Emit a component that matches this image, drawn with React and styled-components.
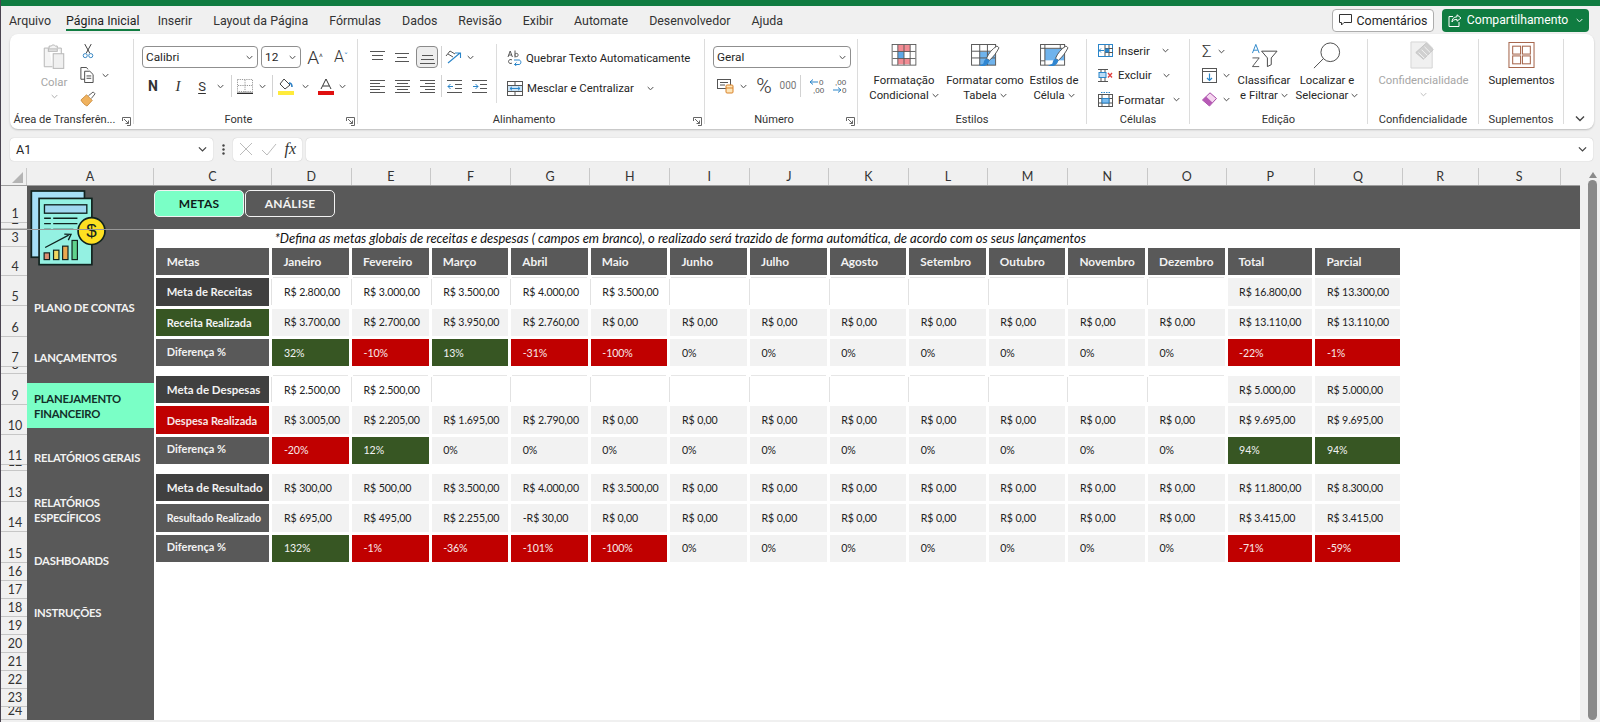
import React from "react";
import styled, { createGlobalStyle } from "styled-components";

const Global = createGlobalStyle`
  html, body { margin: 0; padding: 0; width: 1600px; height: 722px; overflow: hidden; background: #f0f0f0; }
  #root { width: 1600px; height: 722px; }
  * { box-sizing: border-box; }
  svg { flex: none; display: block; }
`;
const UI = `Roboto, "Noto Sans", sans-serif`;
const CAL = `Lato, "Liberation Sans", sans-serif`;

const Page = styled.div`
  width: 1600px; height: 722px; display: flex; flex-direction: column; overflow: hidden;
  background: #f0f0f0; border-left: 1px solid #4a4450; font-family: ${UI}; color: #262626; position: relative;
`;
const TopStrip = styled.div`height: 6px; background: #107c41; margin-left: -1px; flex: none;`;
const MenuBar = styled.div`height: 28px; flex: none; display: flex; align-items: center; padding: 0 11px 0 8px; font-size: 12.4px;`;
const Tabs = styled.nav`display: flex; gap: 21px; flex: 1; height: 100%;`;
const Tab = styled.div`
  display: flex; align-items: center; height: 100%; position: relative; color: #333; margin-right: ${p => p.$mr ?? 0}px;
  ${p => p.$on && `color: #1f1f1f; &::after { content: ""; position: absolute; left: 0; right: 0; bottom: 3px; height: 2px; background: #107c41; }`}
`;
const Comments = styled.button`
  width: 102px; height: 23px; margin-right: 8px; display: flex; align-items: center; justify-content: center; gap: 5px;
  background: #fff; border: 1px solid #adadad; border-radius: 4px; font: 12.4px ${UI}; color: #262626; padding: 0;
`;
const Share = styled.button`
  width: 147px; height: 23px; display: flex; align-items: center; justify-content: center; gap: 5px;
  background: #107c41; border: 0; border-radius: 4px; font: 12.2px ${UI}; color: #fff; padding: 0;
`;
const Ribbon = styled.section`
  height: 95px; flex: none; margin: 0 6px 0 9px; padding: 5px 0 5px; display: flex; background: #fff; border-radius: 8px;
  box-shadow: 0 1px 2px rgba(0,0,0,.22); position: relative;
`;
const Group = styled.div`
  width: ${p => p.$w}px; height: 85px; display: flex; flex-direction: column; flex: none; position: relative;
  border-right: 1px solid #dcdcdc;
`;
const GroupBody = styled.div`
  flex: 1; display: flex; padding: 7px 0 0 ${p => p.$pl ?? 8}px; min-height: 0;
`;
const GroupLabel = styled.div`
  height: 14px; margin-bottom: -3px; line-height: 14px; font-size: 11.1px; text-align: center; color: #333; white-space: nowrap;
  padding-right: ${p => p.$launcher ? 14 : 0}px;
`;
const LauncherBox = styled.span`position: absolute; right: 2px; bottom: -2px; width: 9px; height: 9px; display: flex;`;
const Column = styled.div`display: flex; flex-direction: column; gap: 7px;`;
const Row = styled.div`display: flex; height: 22px; align-items: center; flex: none;`;
const Slot = styled.span`
  width: ${p => p.$w}px; height: 22px; flex: none; display: flex; align-items: center; justify-content: center;
  ${p => p.$pressed && `background: #ededed; border: 1px solid #8a8a8a; border-radius: 4px;`}
`;
const Divider = styled.span`width: 6px; height: 22px; flex: none; display: flex; justify-content: center; &::before { content: ""; width: 1px; background: #d2d2d2; }`;
const SelectBox = styled.div`
  width: ${p => p.$w}px; height: 22px; flex: none; display: flex; align-items: center; justify-content: space-between;
  border: 1px solid #8f8f8f; border-radius: 4px; padding: 0 4px 0 3px; font: 11.8px ${UI}; color: #262626; background: #fff;
`;
const ClipPaste = styled.div`
  width: 40px; margin: -2px 6px 0 24px; display: flex; flex-direction: column; align-items: center; color: #a6a6a6; font-size: 11.4px;
`;
const ClipLabel = styled.span`margin: 5px 0 4px; line-height: 15px;`;
const ClipTools = styled.div`display: flex; flex-direction: column; gap: 8px; margin-top: -3px;`;
const ClipTool = styled.div`display: flex; align-items: center; gap: 8px; height: 16px; padding-left: ${p => p.$pl ?? 0}px;`;
const Glyph = styled.span`
  font: ${p => p.$italic ? "italic" : "normal"} ${p => p.$weight ?? 400} ${p => p.$size ?? 14}px ${p => p.$serif ? `"Liberation Serif", serif` : UI};
  color: ${p => p.$color ?? "#333"}; line-height: 1; ${p => p.$under ? "text-decoration: underline; text-underline-offset: 2px;" : ""}
`;
const WrapSection = styled.div`
  width: 200px; height: 59px; padding: 3px 0 0 10px; margin-top: -2px; border-left: 1px solid #dcdcdc;
  display: flex; flex-direction: column; gap: 8px; white-space: nowrap;
`;
const WrapRow = styled.div`display: flex; align-items: center; height: 22px; gap: 4px; font-size: 11.4px; color: #262626;`;
const BigBtn = styled.div`
  width: ${p => p.$w}px; flex: none; display: flex; flex-direction: column; align-items: center; font-size: 11.3px; line-height: 15px;
  color: ${p => p.$off ? "#a6a6a6" : "#262626"}; white-space: nowrap; margin-top: -5px;
`;
const BigIcon = styled.div`height: 32px; flex: none; padding-top: ${p => p.$pt ?? 0}px; display: flex; align-items: flex-start; justify-content: center;`;
const Caret = styled.span`display: inline-flex; vertical-align: 1px; margin-left: 3px;`;
const OffCaret = styled.span`margin-top: 4px; display: flex;`;
const CellsCol = styled.div`display: flex; flex-direction: column; gap: 3px; margin-top: -6px;`;
const CellBtn = styled.div`display: flex; align-items: center; height: 21.5px; font-size: 11.4px; gap: 5px; white-space: nowrap;`;
const EditCol = styled.div`display: flex; flex-direction: column; gap: 7px; width: 30px; margin-right: 2px; margin-top: -3px;`;
const EditBtn = styled.div`display: flex; align-items: center; gap: 6px; height: 17px;`;
const CollapseBox = styled.div`position: absolute; right: 9px; bottom: 7px; display: flex;`;

const FormulaBar = styled.div`height: 23px; flex: none; margin: 8.5px 7px 0 9px; display: flex; align-items: stretch;`;
const Field = styled.div`
  background: #fff; border-radius: 4px; box-shadow: 0 0 1px rgba(0,0,0,.3); display: flex; align-items: center;
  width: ${p => p.$w ? p.$w + "px" : "auto"}; flex: ${p => p.$w ? "none" : 1}; padding: 0 6px; justify-content: space-between; font-size: 12.6px;
`;
const Dots = styled.div`width: 20px; display: flex; align-items: center; justify-content: center; flex: none;`;
const FxGap = styled.div`width: 4px; flex: none;`;
const FxText = styled.span`font: italic 16px "Liberation Serif", serif; color: #333;`;

const Workbook = styled.div`flex: 1; margin-top: 7.5px; display: flex; min-height: 0; position: relative;`;
const SheetWrap = styled.div`width: 1579px; flex: none; display: flex; flex-direction: column; height: 552px;`;
const ColHeaders = styled.div`height: 18px; display: flex; flex: none; background: #f0f0f0; border-bottom: 1px solid #9e9e9e; font: 12.5px ${CAL}; color: #333;`;
const Corner = styled.div`width: 26px; flex: none; display: flex; align-items: flex-end; justify-content: flex-end; padding: 0 3px 2px 0; border-right: 1px solid #c8c8c8;`;
const ColLetter = styled.div`
  width: ${p => p.$w}px; flex: none; text-align: center; line-height: 17px; border-right: 1px solid #c8c8c8;
`;
const SheetArea = styled.div`flex: 1; display: flex; min-height: 0; position: relative;`;
const RowHeaders = styled.div`width: 26px; flex: none; display: flex; flex-direction: column; font: 12.5px ${CAL}; color: #333; overflow: hidden;`;
const RowNum = styled.div`
  height: ${p => p.$h}px; flex: none; display: flex; align-items: flex-end; justify-content: center; border-bottom: 1px solid #c6c6c6;
  line-height: 16px; overflow: hidden; padding-left: 2px;
`;
const Canvas = styled.div`flex: 1; display: flex; flex-direction: column; min-width: 0; background: #fff;`;
const Band = styled.div`height: 43px; flex: none; background: #595959; display: flex; gap: 1px; padding: 4px 0 0 127px;`;
const SheetTab = styled.div`
  width: ${p => p.$w}px; height: 27px; border: 1px solid #f2f2f2; border-radius: 5px; display: flex; align-items: center; justify-content: center;
  font: 700 12px ${CAL}; letter-spacing: .2px; background: ${p => p.$on ? "#7affc6" : "#595959"}; color: ${p => p.$on ? "#10201a" : "#f2f2f2"};
`;
const Lower = styled.div`flex: 1; display: flex; min-height: 0;`;
const Sidebar = styled.aside`width: 127px; flex: none; background: #595959; display: flex; flex-direction: column; padding-top: 62px;`;
const SideItem = styled.div`
  height: ${p => p.$h ?? 32}px; margin-top: ${p => p.$mt ?? 0}px; flex: none; display: flex; align-items: center; padding-left: 7px; white-space: nowrap;
  font: 700 11.3px/15px ${CAL}; letter-spacing: -.25px; color: ${p => p.$on ? "#12302a" : "#f2f2f2"}; background: ${p => p.$on ? "#7affc6" : "transparent"};
`;
const Main = styled.main`flex: 1; min-width: 0; padding-left: 1.7px; background: #fff;`;
const Note = styled.div`height: 19px; padding-left: 119px; font: italic 13px/18px ${CAL}; color: #111; white-space: nowrap;`;
const Groups = styled.div`display: flex; flex-direction: column; gap: 10px;`;
const Block = styled.div`display: flex; flex-direction: column; gap: 3px;`;
const TableRow = styled.div`
  display: grid; height: 27.3px; gap: 3px; grid-template-columns: 113.8px repeat(12, 76.6px) 84.8px 85px;
`;
const tones = {
  white: ["#fff", "#222"], light: ["#f2f2f2", "#222"], green: ["#375623", "#f2f2f2"], red: ["#c00000", "#f8e8e8"],
  head: ["#595959", "#f2f2f2"], dark: ["#404040", "#f2f2f2"], grey: ["#595959", "#f2f2f2"],
};
const Cell = styled.div`
  display: flex; align-items: center; padding-left: ${p => p.$label ? 11 : 11.5}px; white-space: nowrap;
  background: ${p => tones[p.$tone][0]}; color: ${p => tones[p.$tone][1]};
  font: ${p => p.$label ? 700 : 400} ${p => p.$size ?? 10.6}px ${CAL};
  ${p => !p.$label && "letter-spacing: -.1px;"}
  ${p => p.$line && "box-shadow: -2px 0 0 -1px #e2e2e2, 0 -2px 0 -1px #e6e6e6;"}
  ${p => p.$up && "padding-bottom: 3px;"}
`;
const Scrollbar = styled.div`width: 20px; flex: none; height: 552px; display: flex; flex-direction: column; align-items: center; padding-top: 4px; gap: 2px;`;
const Thumb = styled.div`width: 9px; flex: 1; background: #8a8a8a; border-radius: 5px; margin-left: 5px;`;
const ArrowUp = styled.div`width: 0; height: 0; margin-left: 5px; border: 4px solid transparent; border-top: 0; border-bottom: 6px solid #8a8a8a;`;
const LogoBox = styled.div`position: absolute; left: 27.5px; top: 2.5px; width: 79px; height: 79px; display: flex;`;
const FreezeLine = styled.div`position: absolute; left: 0; top: 43px; width: 153px; height: 1px; background: #989898;`;

const Chev = ({ c = "#444", s = 7 }) => (
  <svg width={s} height={s * .7} viewBox="0 0 10 7" fill="none"><path d="M1 1.5l4 4 4-4" stroke={c} strokeWidth="1.4" /></svg>
);
const Launcher = () => (
  <LauncherBox><svg width="9" height="9" viewBox="0 0 9 9" fill="none" stroke="#666"><path d="M.5 4V.5H8.5V8.5H5" /><path d="M2 2l4.5 4.5M6.5 3.5v3h-3" /></svg></LauncherBox>
);
const Lines = ({ rows, c = "#555" }) => (
  <svg width="15" height="14" viewBox="0 0 15 14" stroke={c} strokeWidth="1" fill="none">
    {rows.map(([x1, x2, y], i) => <path key={i} d={`M${x1} ${y}.5H${x2}`} />)}
  </svg>
);
const Paste = () => (
  <svg width="26" height="26" viewBox="0 0 28 32" fill="none" stroke="#b5b5b5" strokeWidth="1.2">
    <path d="M8 5H2v23h10" fill="#f4f4f4" /><path d="M8 5V2.5h2.5a3 3 0 0 1 5 0H18V5M18 5h5v7" fill="#f4f4f4" />
    <rect x="7" y="6" width="11" height="3" fill="#e6e6e6" /><rect x="13" y="12" width="13" height="18" fill="#f0f0f0" />
  </svg>
);
const Scissors = () => (
  <svg width="12" height="16" viewBox="0 0 13 17" fill="none" stroke="#333" strokeWidth="1"><path d="M3 1l5.5 10M10 1L4.5 11" /><circle cx="3.5" cy="13.5" r="2.2" stroke="#2a7fc0" /><circle cx="9.5" cy="13.5" r="2.2" stroke="#2a7fc0" /></svg>
);
const Copy = () => (
  <svg width="14" height="16" viewBox="0 0 14 17" fill="#fff" stroke="#444" strokeWidth="1"><path d="M5 13H.5V.5h6L8 2.5" /><path d="M4.5 4.5H10l3.5 3.5v8.5h-9z" /><path d="M6.5 9.5h5M6.5 12h5" /></svg>
);
const Brush = () => (
  <svg width="16" height="16" viewBox="0 0 17 17"><path d="M1 9.5L7 4l6 6-5.5 6C5 15 2 12 1 9.5z" fill="#f0b25e" stroke="#c07f2e" strokeWidth=".8" /><path d="M9 5l5-4 2 2-4 5" fill="#fff" stroke="#555" strokeWidth="1" /></svg>
);
const BorderIcon = () => (
  <svg width="16" height="15" viewBox="0 0 16 15" fill="none" stroke="#999" strokeDasharray="1.2 1"><rect x=".5" y=".5" width="15" height="12" /><path d="M8 1v12M1 6.5h14" /><path d="M0 14.3h16" stroke="#222" strokeDasharray="0" strokeWidth="1.3" /></svg>
);
const FillIcon = () => (
  <svg width="16" height="17" viewBox="0 0 16 17"><path d="M6 1l6 6-5 4-5-5z" fill="#fff" stroke="#444" /><path d="M11 5c2 0 3 2 3 4" stroke="#2c7fc4" strokeWidth="1.6" fill="none" /><rect y="13" width="16" height="4" fill="#ffeb3b" /></svg>
);
const FontColor = () => (
  <svg width="16" height="17" viewBox="0 0 16 17"><path d="M3 11L8 1l5 10M5 8h6" stroke="#333" fill="none" /><rect y="13" width="16" height="4" fill="#e01010" /></svg>
);
const Orient = () => (
  <svg width="18" height="16" viewBox="0 0 18 16" fill="none"><path d="M1 7l4-5 5 3M3 5l5 3" stroke="#555" /><path d="M3 14L15 4M10 4h5.5v5" stroke="#2a85c9" strokeWidth="1.1" /></svg>
);
const Indent = ({ flip }) => (
  <svg width="15" height="13" viewBox="0 0 15 13" fill="none" stroke="#555"><path d="M0 .5h15M0 12.5h15M8 4.5h7M8 8.5h7" />
    <path d={flip ? "M6 6.5H1M3.5 4L1 6.5 3.5 9" : "M1 6.5h5M3.5 4L6 6.5 3.5 9"} stroke="#2a85c9" /></svg>
);
const WrapIcon = () => (
  <svg width="15" height="16" viewBox="0 0 15 16" fill="none"><path d="M1 7l2.2-6L5.4 7M1.8 5h2.8M8 .5v7M8 4.5c0-1.5 3-1.5 3 0v1c0 1.5-3 1.5-3 0" stroke="#555" /><path d="M5 10c-1-1-3.5-.5-3.5 1.5S4 14 5 13" stroke="#555" /><path d="M7 10h5c2.5 0 2.5 4.5 0 4.5H7.5M9.5 12.5l-2 2 2 1.5" stroke="#2a85c9" /></svg>
);
const MergeIcon = () => (
  <svg width="16" height="15" viewBox="0 0 16 15" fill="#fff"><rect x=".5" y=".5" width="15" height="14" stroke="#555" /><rect x="1" y="5" width="14" height="5" fill="#cbe4f7" /><path d="M1 4.5h14M1 10.5h14M8 1v3M8 11v3" stroke="#555" /><path d="M3 7.5h10M5 5.8L3 7.5l2 1.7M11 5.8l2 1.7-2 1.7" stroke="#2a85c9" fill="none" /></svg>
);
const Accounting = () => (
  <svg width="17" height="15" viewBox="0 0 17 15" fill="none"><rect x=".5" y=".5" width="13" height="9" stroke="#555" /><path d="M3 3.5h8M3 6h5" stroke="#555" /><rect x="9" y="6" width="7" height="8" rx="1" fill="#fde5b8" stroke="#d9822b" /><path d="M9 9h7" stroke="#d9822b" /></svg>
);
const DecLeft = () => (
  <svg width="17" height="16" viewBox="0 0 17 16" fill="none"><path d="M1 4h8M4 1.5L1 4l3 2.5" stroke="#2a85c9" /><text x="10" y="7" fontSize="8" fill="#555" fontFamily="Liberation Sans">0</text><text x="4" y="15" fontSize="8" fill="#555" fontFamily="Liberation Sans">,00</text></svg>
);
const DecRight = () => (
  <svg width="17" height="16" viewBox="0 0 17 16" fill="none"><text x="3" y="7" fontSize="8" fill="#555" fontFamily="Liberation Sans">,00</text><path d="M1 12h8M6 9.5L9 12l-3 2.5" stroke="#2a85c9" /><text x="10" y="15" fontSize="8" fill="#555" fontFamily="Liberation Sans">0</text></svg>
);
const CondFormat = () => (
  <svg width="26" height="22" viewBox="0 0 28 25">
    <rect x="7" y="1" width="7" height="8" fill="#f28b93" /><rect x="7" y="9" width="7" height="7" fill="#5ea7e6" /><rect x="7" y="16" width="14" height="7" fill="#f28b93" /><rect x="14" y="1" width="7" height="8" fill="#f28b93" />
    <g stroke="#555" fill="none"><rect x=".5" y=".5" width="27" height="23.5" /><path d="M7 1v23M14 1v23M21 1v23M1 8.5h26M1 16.5h26" /></g>
  </svg>
);
const BrushOver = () => <g><path d="M27 2c-5 3-9 8-11 13l3 2c4-3 8-9 10-13z" fill="#fff" stroke="#555" /><path d="M16 15c-2 1-3 3-3 5-1 1-3 2-5 2 5 2 10 1 11-5z" fill="#2f86d1" /></g>;
const TableFmt = () => (
  <svg width="29" height="25" viewBox="0 0 30 26">
    <rect x="9" y="8" width="16" height="14" fill="#6fb3ec" />
    <g stroke="#555" fill="none"><rect x=".5" y=".5" width="25" height="21.5" /><path d="M9 1v21M17 1v21M1 7.5h24M1 14.5h24" /></g><BrushOver />
  </svg>
);
const CellStyle = () => (
  <svg width="29" height="25" viewBox="0 0 30 26">
    <rect x="5" y="5" width="20" height="12" fill="#6fb3ec" />
    <g stroke="#555" fill="none"><rect x=".5" y=".5" width="25" height="21.5" /><path d="M5 1v21M21 1v4M1 4.5h24M1 17.5h4" /></g><BrushOver />
  </svg>
);
const InsertCell = () => (
  <svg width="15" height="13" viewBox="0 0 15 13" fill="none"><rect x=".5" y=".5" width="14" height="12" stroke="#2a85c9" /><path d="M7 1v11M11 1v11M7 4.5h8M7 8.5h8" stroke="#555" /><rect x="7" y="4.5" width="4" height="4" fill="#2a85c9" /><path d="M6 6.5H1M3 4.5l-2 2 2 2" stroke="#2a85c9" /></svg>
);
const DeleteCell = () => (
  <svg width="15" height="13" viewBox="0 0 15 13" fill="none"><path d="M0 .5h10M0 12.5h10M3 .5v3M7 .5v3M3 9v3.5M7 9v3.5" stroke="#555" /><rect x="1" y="3.5" width="7" height="5" fill="#bcdcf5" stroke="#2a85c9" /><path d="M10 4l4 4.5M14 4l-4 4.5" stroke="#e04040" strokeWidth="1.3" /></svg>
);
const FormatCell = () => (
  <svg width="15" height="15" viewBox="0 0 15 15" fill="none" stroke="#555"><rect x=".5" y="2.5" width="14" height="12" /><path d="M4 3v11M11 3v11M1 6.5h13M1 11h13" /><rect x="4" y="6.5" width="7" height="4.5" fill="#7bbcf0" stroke="#2a85c9" /><path d="M3 .5h9" stroke="#2a85c9" strokeDasharray="1.5 1" /></svg>
);
const FillDown = () => (
  <svg width="15" height="15" viewBox="0 0 15 15" fill="none"><rect x=".5" y=".5" width="14" height="14" stroke="#555" /><path d="M1 3.5h13" stroke="#555" /><path d="M7.5 5.5v7M5 10l2.5 2.5L10 10" stroke="#2a85c9" strokeWidth="1.2" /></svg>
);
const Eraser = () => (
  <svg width="15" height="15" viewBox="0 0 15 15"><path d="M0.5 8L8 .8 14.5 6.5 7.5 14z" fill="#f5d6ef" stroke="#a347a3" /><path d="M.5 8l3.5-3.6 6.4 6L7.5 14z" fill="#b65ab5" /></svg>
);
const SortFilter = () => (
  <svg width="27" height="25" viewBox="0 0 28 25" fill="none"><path d="M1.5 10L5 1l3.5 9M3 7h4" stroke="#2a85c9" /><path d="M1.5 15h7L1.5 24h7" stroke="#555" /><path d="M11 8h16l-6 7v7l-4 2v-9z" stroke="#444" /></svg>
);
const Finder = () => (
  <svg width="28" height="28" viewBox="0 0 30 30" fill="none" stroke="#444" strokeWidth="1"><circle cx="18.5" cy="11" r="10" fill="#fff" /><path d="M11 18L1 28" /></svg>
);
const Sensitivity = () => (
  <svg width="27" height="28" viewBox="0 0 28 29"><path d="M1 1h16l6 6v21H1z" fill="#f0f0f0" stroke="#d4d4d4" /><path d="M6 12L17 2l7 7-10 10z" fill="#d0d0d0" stroke="#c4c4c4" /><path d="M9 12l6 6M12 9l6 6M15 6l6 6" stroke="#f4f4f4" /></svg>
);
const Addins = () => (
  <svg width="27" height="26" viewBox="0 0 28 28" fill="none" stroke="#a5644a" strokeWidth="1.1"><rect x=".5" y=".5" width="27" height="27" /><rect x="4.5" y="4.5" width="8.5" height="8.5" /><rect x="15" y="4.5" width="8.5" height="8.5" /><rect x="4.5" y="15" width="8.5" height="8.5" /><rect x="15" y="15" width="8.5" height="8.5" /></svg>
);
const Logo = () => (
  <svg width="79" height="79" viewBox="25 25 235 235">
    <rect x="32" y="31" width="158" height="197" fill="#a6e0f7" stroke="#10231f" strokeWidth="5" />
    <rect x="55" y="53" width="157" height="197" fill="#94f1e2" stroke="#10231f" strokeWidth="5" />
    <rect x="71" y="72" width="126" height="25" fill="#a0d8f0" stroke="#10231f" strokeWidth="4" />
    <g stroke="#10231f" strokeWidth="4"><path d="M70 112h20M97 112h72M70 128h20M97 128h72M70 145h20M97 145h60" /></g>
    <path d="M73 199l70-37M130 159l20 1-8 17" fill="none" stroke="#10231f" strokeWidth="4" />
    <g stroke="#10231f" strokeWidth="3.5"><rect x="70" y="215" width="16" height="20" fill="#db8f72" /><rect x="98" y="207" width="16" height="28" fill="#f2d760" /><rect x="125" y="195" width="16" height="40" fill="#eaa950" /><rect x="153" y="178" width="16" height="57" fill="#5ed28d" /></g>
    <circle cx="211" cy="150" r="40" fill="#fde021" stroke="#10231f" strokeWidth="5" />
    <text x="211" y="169" textAnchor="middle" fontSize="56" fontFamily="Liberation Sans" fill="#10231f">$</text>
  </svg>
);

const tabs = [["Arquivo", -6], ["Página Inicial", -3], ["Inserir"], ["Layout da Página"], ["Fórmulas"], ["Dados"], ["Revisão"], ["Exibir"], ["Automate"], ["Desenvolvedor"], ["Ajuda"]];
const months = ["Janeiro", "Fevereiro", "Março", "Abril", "Maio", "Junho", "Julho", "Agosto", "Setembro", "Outubro", "Novembro", "Dezembro"];
const colWidths = [["A", 127], ["C", 118], ["D", 79.6], ["E", 79.6], ["F", 79.6], ["G", 79.6], ["H", 79.6], ["I", 79.6], ["J", 79.6], ["K", 79.6], ["L", 79.6], ["M", 79.6], ["N", 79.6], ["O", 79.6], ["P", 87.5], ["Q", 88], ["R", 76], ["S", 82]];
const rowHeights = [["1", 37], ["2", 6], ["3", 18], ["4", 29], ["5", 30], ["6", 31], ["7", 30], ["8", 7], ["9", 31], ["10", 30], ["11", 30], ["12", 6], ["13", 31], ["14", 30], ["15", 31], ["16", 18], ["17", 18], ["18", 18], ["19", 18], ["20", 18], ["21", 18], ["22", 18], ["23", 18], ["24", 13]];
const zero = "R$ 0,00";
const m = v => `R$ ${v},00`;
const fill = (vals, v = zero) => [...vals, ...Array(12 - vals.length).fill(v)];
const pct = vals => fill(vals, "0%");
const toneOf = s => s.startsWith("-") ? "red" : s === "0%" ? "light" : "green";

const blocks = [
  [
    { label: "Meta de Receitas", tone: "dark", size: 11.2, base: "white", line: true, vals: fill(["2.800", "3.000", "3.500", "4.000", "3.500"].map(m), ""), tot: [m("16.800"), m("13.300")] },
    { label: "Receita Realizada", tone: "green", size: 11, base: "light", vals: fill(["3.700", "2.700", "3.950", "2.760"].map(m)), tot: [m("13.110"), m("13.110")] },
    { label: "Diferença %", tone: "grey", size: 11, diff: true, up: true, vals: pct(["32%", "-10%", "13%", "-31%", "-100%"]), tot: ["-22%", "-1%"] },
  ],
  [
    { label: "Meta de Despesas", tone: "dark", size: 11.5, base: "white", line: true, vals: fill([m("2.500"), m("2.500")], ""), tot: [m("5.000"), m("5.000")] },
    { label: "Despesa Realizada", tone: "red", size: 11, base: "light", vals: fill(["3.005", "2.205", "1.695", "2.790"].map(m)), tot: [m("9.695"), m("9.695")] },
    { label: "Diferença %", tone: "grey", size: 11, diff: true, up: true, vals: pct(["-20%", "12%"]), tot: ["94%", "94%"] },
  ],
  [
    { label: "Meta de Resultado", tone: "dark", size: 11.5, base: "light", vals: fill(["300", "500", "3.500", "4.000", "3.500"].map(m)), tot: [m("11.800"), m("8.300")] },
    { label: "Resultado Realizado", tone: "grey", size: 10.6, base: "light", vals: fill([m("695"), m("495"), m("2.255"), "-R$ 30,00"]), tot: [m("3.415"), m("3.415")] },
    { label: "Diferença %", tone: "grey", size: 11, diff: true, up: true, vals: pct(["132%", "-1%", "-36%", "-101%", "-100%"]), tot: ["-71%", "-59%"] },
  ],
];

const DataRow = ({ r }) => (
  <TableRow>
    <Cell $label $tone={r.tone} $size={r.size} $up={r.up}>{r.label}</Cell>
    {r.vals.map((v, i) => <Cell key={i} $tone={r.diff ? toneOf(v) : r.base} $line={r.line}>{v}</Cell>)}
    {r.tot.map((v, i) => <Cell key={"t" + i} $tone={r.diff ? toneOf(v) : "light"}>{v}</Cell>)}
  </TableRow>
);

export default function App() {
  return (
    <Page>
      <Global />
      <TopStrip />
      <MenuBar>
        <Tabs>
          {tabs.map(([t, mr]) => <Tab key={t} $mr={mr} $on={t === "Página Inicial"}>{t}</Tab>)}
        </Tabs>
        <Comments>
          <svg width="13" height="12" viewBox="0 0 13 12" fill="none" stroke="#333"><path d="M.5.5h12v8H5L2.5 11V8.5h-2z" /></svg>
          Comentários
        </Comments>
        <Share>
          <svg width="14" height="13" viewBox="0 0 14 13" fill="none" stroke="#fff"><path d="M9 .8L13 4 9 7.2V5.4C6 5.4 4.6 6.5 4 8c0-3 1.5-5 5-5.2zM5 2.5H1v10h10V8" /></svg>
          Compartilhamento
          <Caret><Chev c="#fff" /></Caret>
        </Share>
      </MenuBar>
      <Ribbon>
        <Group $w={124}>
          <GroupBody $pl={0}>
            <ClipPaste><Paste /><ClipLabel>Colar</ClipLabel><Chev c="#aaa" /></ClipPaste>
            <ClipTools>
              <ClipTool $pl={2}><Scissors /></ClipTool>
              <ClipTool><Copy /><Chev /></ClipTool>
              <ClipTool><Brush /></ClipTool>
            </ClipTools>
          </GroupBody>
          <GroupLabel $launcher>Área de Transferên...</GroupLabel>
          <Launcher />
        </Group>
        <Group $w={224}>
          <GroupBody>
            <Column>
              <Row>
                <SelectBox $w={116}>Calibri<Chev /></SelectBox>
                <Slot $w={3} />
                <SelectBox $w={40}>12<Chev /></SelectBox>
                <Slot $w={28}><Glyph $size={19} $weight={300}>A</Glyph><Glyph $size={9} $color="#555">^</Glyph></Slot>
                <Slot $w={24}><Glyph $size={16} $weight={300}>A</Glyph><Glyph $size={9} $color="#2a85c9">ˇ</Glyph></Slot>
              </Row>
              <Row>
                <Slot $w={22}><Glyph $weight={700} $size={14}>N</Glyph></Slot>
                <Slot $w={28}><Glyph $italic $serif $size={15}>I</Glyph></Slot>
                <Slot $w={20}><Glyph $under $size={13}>S</Glyph></Slot>
                <Slot $w={16}><Chev /></Slot>
                <Divider />
                <Slot $w={21}><BorderIcon /></Slot>
                <Slot $w={14}><Chev /></Slot>
                <Divider />
                <Slot $w={22}><FillIcon /></Slot>
                <Slot $w={16}><Chev /></Slot>
                <Slot $w={25}><FontColor /></Slot>
                <Slot $w={8}><Chev /></Slot>
              </Row>
            </Column>
          </GroupBody>
          <GroupLabel $launcher>Fonte</GroupLabel>
          <Launcher />
        </Group>
        <Group $w={347}>
          <GroupBody>
            <Column>
              <Row>
                <Slot $w={22}><Lines rows={[[0, 15, 1], [2, 13, 5], [2, 13, 9]]} /></Slot>
                <Slot $w={28}><Lines rows={[[0, 14, 3], [2, 12, 7], [0, 14, 11]]} /></Slot>
                <Slot $w={22} $pressed><Lines rows={[[2, 13, 5], [1, 14, 9], [0, 15, 13]]} /></Slot>
                <Divider />
                <Slot $w={20}><Orient /></Slot>
                <Slot $w={12}><Chev /></Slot>
                <Slot $w={20} />
              </Row>
              <Row>
                <Slot $w={22}><Lines rows={[[0, 15, 1], [0, 10, 4], [0, 15, 7], [0, 10, 10], [0, 15, 13]]} /></Slot>
                <Slot $w={28}><Lines rows={[[0, 15, 1], [2, 13, 4], [0, 15, 7], [2, 13, 10], [0, 15, 13]]} /></Slot>
                <Slot $w={22}><Lines rows={[[0, 15, 1], [5, 15, 4], [0, 15, 7], [5, 15, 10], [0, 15, 13]]} /></Slot>
                <Divider />
                <Slot $w={20}><Indent flip /></Slot>
                <Slot $w={30}><Indent /></Slot>
              </Row>
            </Column>
            <WrapSection>
              <WrapRow><WrapIcon />Quebrar Texto Automaticamente</WrapRow>
              <WrapRow><MergeIcon />Mesclar e Centralizar<Caret><Slot $w={20}><Chev /></Slot></Caret></WrapRow>
            </WrapSection>
          </GroupBody>
          <GroupLabel $launcher>Alinhamento</GroupLabel>
          <Launcher />
        </Group>
        <Group $w={153}>
          <GroupBody>
            <Column>
              <Row><SelectBox $w={138}>Geral<Chev /></SelectBox></Row>
              <Row>
                <Slot $w={24}><Accounting /></Slot>
                <Slot $w={12}><Chev /></Slot>
                <Slot $w={30}><Glyph $size={21} $weight={300}>%</Glyph></Slot>
                <Slot $w={18}><Glyph $size={10} $color="#777">000</Glyph></Slot>
                <Divider />
                <Slot $w={28}><DecLeft /></Slot>
                <Slot $w={18}><DecRight /></Slot>
              </Row>
            </Column>
          </GroupBody>
          <GroupLabel $launcher>Número</GroupLabel>
          <Launcher />
        </Group>
        <Group $w={229}>
          <GroupBody $pl={4}>
            <BigBtn $w={84}><BigIcon $pt={3}><CondFormat /></BigIcon>Formatação<span>Condicional<Caret><Chev /></Caret></span></BigBtn>
            <BigBtn $w={78}><BigIcon $pt={3}><TableFmt /></BigIcon>Formatar como<span>Tabela<Caret><Chev /></Caret></span></BigBtn>
            <BigBtn $w={60}><BigIcon $pt={3}><CellStyle /></BigIcon>Estilos de<span>Célula<Caret><Chev /></Caret></span></BigBtn>
          </GroupBody>
          <GroupLabel>Estilos</GroupLabel>
        </Group>
        <Group $w={103}>
          <GroupBody $pl={11}>
            <CellsCol>
              <CellBtn><InsertCell />Inserir<Caret><Slot $w={16}><Chev /></Slot></Caret></CellBtn>
              <CellBtn><DeleteCell />Excluir<Caret><Slot $w={14}><Chev /></Slot></Caret></CellBtn>
              <CellBtn><FormatCell />Formatar<Caret><Chev /></Caret></CellBtn>
            </CellsCol>
          </GroupBody>
          <GroupLabel>Células</GroupLabel>
        </Group>
        <Group $w={178}>
          <GroupBody $pl={12}>
            <EditCol>
              <EditBtn><Glyph $size={17} $weight={300}>Σ</Glyph><Chev /></EditBtn>
              <EditBtn><FillDown /><Chev /></EditBtn>
              <EditBtn><Eraser /><Chev /></EditBtn>
            </EditCol>
            <BigBtn $w={60}><BigIcon $pt={2}><SortFilter /></BigIcon>Classificar<span>e Filtrar<Caret><Chev /></Caret></span></BigBtn>
            <BigBtn $w={66}><BigIcon $pt={1}><Finder /></BigIcon>Localizar e<span>Selecionar<Caret><Chev /></Caret></span></BigBtn>
          </GroupBody>
          <GroupLabel>Edição</GroupLabel>
        </Group>
        <Group $w={111}>
          <GroupBody $pl={0}>
            <BigBtn $w={111} $off><BigIcon><Sensitivity /></BigIcon>Confidencialidade<OffCaret><Chev c="#bbb" /></OffCaret></BigBtn>
          </GroupBody>
          <GroupLabel>Confidencialidade</GroupLabel>
        </Group>
        <Group $w={85}>
          <GroupBody $pl={0}>
            <BigBtn $w={85}><BigIcon $pt={1}><Addins /></BigIcon>Suplementos</BigBtn>
          </GroupBody>
          <GroupLabel>Suplementos</GroupLabel>
        </Group>
        <CollapseBox><Chev s={10} /></CollapseBox>
      </Ribbon>
      <FormulaBar>
        <Field $w={203}>A1<Chev s={9} /></Field>
        <Dots><svg width="3" height="11" fill="#444"><circle cx="1.5" cy="1.5" r="1.2" /><circle cx="1.5" cy="5.5" r="1.2" /><circle cx="1.5" cy="9.5" r="1.2" /></svg></Dots>
        <Field $w={69}>
          <svg width="14" height="14" fill="none" stroke="#bbb"><path d="M1 1l12 12M13 1L1 13" /></svg>
          <svg width="16" height="14" fill="none" stroke="#bbb"><path d="M1 8l5 5L15 2" /></svg>
          <FxText>fx</FxText>
        </Field>
        <FxGap />
        <Field><span /><Chev s={9} /></Field>
      </FormulaBar>
      <Workbook>
        <SheetWrap>
          <ColHeaders>
            <Corner><svg width="11" height="11"><path d="M11 0v11H0z" fill="#b4b4b4" /></svg></Corner>
            {colWidths.map(([l, w]) => <ColLetter key={l} $w={w}>{l}</ColLetter>)}
          </ColHeaders>
          <SheetArea>
            <RowHeaders>
              {rowHeights.map(([l, h]) => <RowNum key={l} $h={h}>{l}</RowNum>)}
            </RowHeaders>
            <Canvas>
              <Band>
                <SheetTab $w={90} $on>METAS</SheetTab>
                <SheetTab $w={90}>ANÁLISE</SheetTab>
              </Band>
              <Lower>
                <Sidebar>
                  <SideItem>PLANO DE CONTAS</SideItem>
                  <SideItem $mt={18}>LANÇAMENTOS</SideItem>
                  <SideItem $mt={10} $h={45} $on>PLANEJAMENTO<br />FINANCEIRO</SideItem>
                  <SideItem $mt={13}>RELATÓRIOS GERAIS</SideItem>
                  <SideItem $mt={14} $h={45}>RELATÓRIOS<br />ESPECÍFICOS</SideItem>
                  <SideItem $mt={12}>DASHBOARDS</SideItem>
                  <SideItem $mt={20}>INSTRUÇÕES</SideItem>
                </Sidebar>
                <Main>
                  <Note>*Defina as metas globais de receitas e despesas ( campos em branco), o realizado será trazido de forma automática, de acordo com os seus lançamentos</Note>
                  <Groups>
                    <Block>
                      <TableRow>
                        <Cell $label $tone="head" $size={11.8}>Metas</Cell>
                        {months.map(x => <Cell key={x} $label $tone="head" $size={11.8}>{x}</Cell>)}
                        <Cell $label $tone="head" $size={11.8}>Total</Cell>
                        <Cell $label $tone="head" $size={11.8}>Parcial</Cell>
                      </TableRow>
                      {blocks[0].map(r => <DataRow key={r.label} r={r} />)}
                    </Block>
                    {blocks.slice(1).map((b, i) => <Block key={i}>{b.map(r => <DataRow key={r.label} r={r} />)}</Block>)}
                  </Groups>
                </Main>
              </Lower>
            </Canvas>
            <LogoBox><Logo /></LogoBox>
            <FreezeLine />
          </SheetArea>
        </SheetWrap>
        <Scrollbar><ArrowUp /><Thumb /></Scrollbar>
      </Workbook>
    </Page>
  );
}
